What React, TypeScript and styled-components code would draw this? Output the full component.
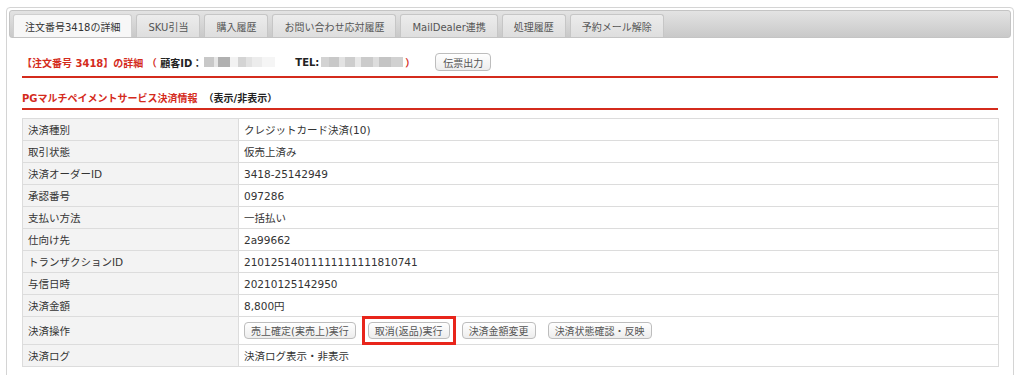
import styled, { createGlobalStyle } from 'styled-components';

const GlobalStyle = createGlobalStyle`
  body {
    margin: 0;
    background: #fff;
    font-family: 'DejaVu Sans', 'Noto Sans CJK JP', sans-serif;
    color: #333;
    overflow: hidden;
  }
`;

interface Tab {
  label: string;
  active?: boolean;
}

const tabs: Tab[] = [
  { label: '注文番号3418の詳細', active: true },
  { label: 'SKU引当' },
  { label: '購入履歴' },
  { label: 'お問い合わせ応対履歴' },
  { label: 'MailDealer連携' },
  { label: '処理履歴' },
  { label: '予約メール解除' },
];

const rows: [string, string][] = [
  ['決済種別', 'クレジットカード決済(10)'],
  ['取引状態', '仮売上済み'],
  ['決済オーダーID', '3418-25142949'],
  ['承認番号', '097286'],
  ['支払い方法', '一括払い'],
  ['仕向け先', '2a99662'],
  ['トランザクションID', '21012514011111111111810741'],
  ['与信日時', '20210125142950'],
  ['決済金額', '8,800円'],
];

// ぼかし部分（モザイク）
const idMosaic: [number, string][] = [
  [10, '#c8c8c8'],
  [4, '#e6e6e6'],
  [12, '#b0b0b0'],
  [8, '#f2f2f2'],
  [8, '#d4d4d4'],
  [6, '#e2e2e2'],
  [10, '#ececec'],
  [13, '#f5f5f5'],
];

const telMosaic: [number, string][] = [
  [8, '#d3d3d3'],
  [10, '#c8c8c8'],
  [6, '#e2e2e2'],
  [10, '#cdcdcd'],
  [6, '#e8e8e8'],
  [12, '#cbcbcb'],
  [6, '#dddddd'],
  [12, '#c4c4c4'],
  [12, '#d1d1d1'],
];

const Mosaic = ({ blocks }: { blocks: [number, string][] }) => (
  <MosaicWrap>
    {blocks.map(([w, c], i) => (
      <MosaicBlock key={i} style={{ width: w, background: c }} />
    ))}
  </MosaicWrap>
);

export default function App() {
  return (
    <>
      <GlobalStyle />
      <Panel>
        <TabBar>
          {tabs.map((t) => (
            <TabItem key={t.label} active={t.active}>
              {t.label}
            </TabItem>
          ))}
        </TabBar>
        <Content>
          <TitleRow>
            <Title>
              <Red>【注文番号 3418】の詳細 （ </Red>
              <span>顧客ID：</span>
              <Mosaic blocks={idMosaic} />
              <TelLabel>TEL:</TelLabel>
              <Mosaic blocks={telMosaic} />
              <Red>）</Red>
            </Title>
            <Button tall>伝票出力</Button>
          </TitleRow>
          <SubRow>
            <Title>
              <Red>PGマルチペイメントサービス決済情報</Red>
              <Toggle>（表示/非表示）</Toggle>
            </Title>
          </SubRow>
          <Table>
            <tbody>
              {rows.map(([k, v]) => (
                <tr key={k}>
                  <Th>{k}</Th>
                  <Td>{v}</Td>
                </tr>
              ))}
              <tr>
                <Th>決済操作</Th>
                <Td ops>
                  <ButtonGroup>
                    <Button>売上確定(実売上)実行</Button>
                    <Highlight>
                      <Button>取消(返品)実行</Button>
                    </Highlight>
                    <Button>決済金額変更</Button>
                    <Button>決済状態確認・反映</Button>
                  </ButtonGroup>
                </Td>
              </tr>
              <tr>
                <Th>決済ログ</Th>
                <Td>決済ログ表示・非表示</Td>
              </tr>
            </tbody>
          </Table>
        </Content>
      </Panel>
    </>
  );
}

const Panel = styled.div`
  margin: 7px 0 0 6px;
  width: 1008px;
  height: 380px;
  box-sizing: border-box;
  border: 1px solid #d4d4d4;
  border-radius: 4px;
  padding: 2px;
`;

const TabBar = styled.div`
  height: 28px;
  box-sizing: border-box;
  display: flex;
  align-items: flex-end;
  gap: 4px;
  padding: 0 0 0 3px;
  border: 1px solid #c4c4c4;
  border-radius: 3px;
  background: linear-gradient(#e3e3e3, #c9c9c9);
`;

const TabItem = styled.div<{ active?: boolean }>`
  height: 23px;
  box-sizing: border-box;
  display: flex;
  align-items: center;
  padding: 0 11px;
  font-size: 10px;
  color: ${({ active }) => (active ? '#333' : '#555')};
  border: 1px solid ${({ active }) => (active ? '#cfcfcf' : '#c6c6c6')};
  border-bottom: 0;
  border-radius: 3px 3px 0 0;
  background: ${({ active }) => (active ? '#f7f7f7' : 'linear-gradient(#ececec, #dedede)')};
`;

const Content = styled.div`
  padding: 12px 13px 0;
`;

const TitleRow = styled.div`
  height: 24px;
  padding-bottom: 2px;
  display: flex;
  align-items: center;
  border-bottom: 2px solid #d42b1c;
`;

const SubRow = styled.div`
  height: 22px;
  padding-top: 8px;
  display: flex;
  align-items: center;
  border-bottom: 2px solid #d42b1c;
`;

const Title = styled.div`
  display: flex;
  align-items: center;
  font-size: 10px;
  font-weight: bold;
  color: #222;
  white-space: pre;
`;

const Red = styled.span`
  color: #d42b1c;
`;

const TelLabel = styled.span`
  margin-left: 18px;
`;

const Toggle = styled.span`
  margin-left: 6px;
`;

const MosaicWrap = styled.span`
  display: inline-flex;
  height: 10px;
  margin: 0 2px;
`;

const MosaicBlock = styled.span`
  display: block;
  height: 100%;
`;

const Button = styled.button<{ tall?: boolean }>`
  display: block;
  height: ${({ tall }) => (tall ? '18px' : '17px')};
  margin-left: ${({ tall }) => (tall ? '20px' : '0')};
  padding: 0 ${({ tall }) => (tall ? '7px' : '6px')};
  font-family: 'DejaVu Sans', 'Noto Sans CJK JP', sans-serif;
  font-size: 10px;
  color: #555;
  border: 1px solid #bdbdbd;
  border-radius: 4px;
  background: linear-gradient(#ffffff, #ededed);
  white-space: nowrap;
`;

// 注釈用の赤枠（レイアウトに影響しないよう負のマージン）
const Highlight = styled.span`
  display: block;
  margin: -6px;
  padding: 3px;
  border: 3px solid #e8251b;
`;

const ButtonGroup = styled.div`
  display: flex;
  align-items: center;
  gap: 12px;
`;

const Table = styled.table`
  margin-top: 8px;
  width: 977px;
  border-collapse: collapse;
  font-size: 10.5px;
  color: #333;
`;

const Th = styled.td`
  width: 205px;
  height: 21px;
  padding: 0 5px;
  border: 1px solid #dcdcdc;
  background: #f3f3f3;
  font-weight: normal;
`;

const Td = styled.td<{ ops?: boolean }>`
  height: ${({ ops }) => (ops ? '27px' : '21px')};
  padding: 0 5px;
  border: 1px solid #dcdcdc;
  background: #fff;
`;
